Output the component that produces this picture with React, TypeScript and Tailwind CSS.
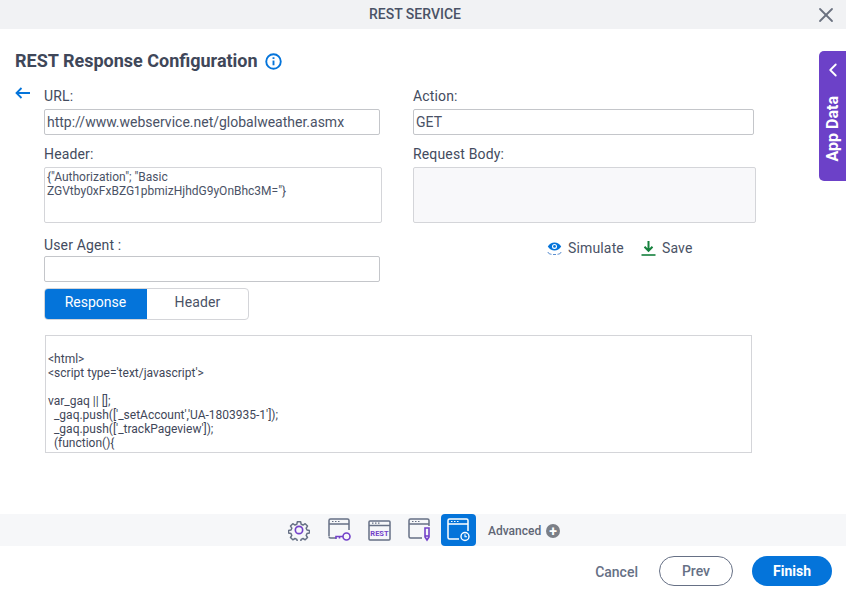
import { ChevronLeft, X } from 'lucide-react'

const labelClass = 'block text-[14px] leading-[18px] font-normal tracking-[0.15px] text-[#434b5e]'
const inputClass = 'block h-[26px] border border-[#c4c6ca] rounded-[2px] bg-white px-[2px] text-[14px] leading-[24px] text-[#4a5266]'
const slate = '#667085'
const purple = '#7342c9'

const codeLines = [
    '',
    '<html>',
    "<script type='text/javascript'>",
    '',
    'var_gaq || [];',
    "  _gaq.push(['_setAccount','UA-1803935-1']);",
    "  _gaq.push(['_trackPageview']);",
    '  (function(){',
]

const GearIcon = () => (
    <svg width="22" height="22" viewBox="0 0 24 24" fill="none" stroke={slate} strokeWidth="1.800" strokeLinejoin="round">
        <path d="M10 2h4l.6 3 2.300 1 2.600-1.600 2.800 2.800-1.600 2.600 1 2.200 3 .6v3l-3 .7-1 2.300 1.600 2.500-2.800 2.800-2.600-1.600-2.300 1-.6 3h-4l-.6-3-2.300-1-2.600 1.600-2.800-2.800 1.600-2.500-1-2.300-3-.7v-3l3-.6 1-2.200L1.700 7.200l2.800-2.800 2.600 1.600 2.300-1z" transform="translate(1.200 1.200) scale(.9)" />
        <circle cx="12" cy="12" r="4" stroke={purple} />
    </svg>
)

const KeyIcon = () => (
    <svg width="23" height="24" viewBox="0 0 23 24">
        <path d="M1 18V2.500A1.500 1.500 0 0 1 2.500 1h17A1.500 1.500 0 0 1 21 2.500V12M1 6h20M8 20H2.500A1.500 1.500 0 0 1 1 18.500" fill="none" stroke={slate} strokeWidth="1.500" />
        <path d="M4 3.500h1.500M7 3.500h1.500M10 3.500h1.500" stroke={slate} strokeWidth="1.200" />
        <circle cx="18.500" cy="18.500" r="3.500" fill="none" stroke={purple} strokeWidth="1.600" />
        <path d="M15 18.500H8v2.500M11.500 18.500v2" fill="none" stroke={purple} strokeWidth="1.600" />
    </svg>
)

const RestIcon = () => (
    <svg width="23" height="21" viewBox="0 0 23 21">
        <rect x="1" y="1" width="21" height="19" rx="1" fill="none" stroke={slate} strokeWidth="1.500" />
        <path d="M1 5.500h21" stroke={slate} strokeWidth="1.500" />
        <path d="M4 3.200h1.500M7 3.200h1.500M10 3.200h1.500" stroke={slate} strokeWidth="1.200" />
        <text x="11.500" y="15.500" textAnchor="middle" fontSize="7.500" fontWeight="700" fontFamily="Roboto, sans-serif" fill={purple}>REST</text>
    </svg>
)

const PenIcon = () => (
    <svg width="23" height="24" viewBox="0 0 23 24">
        <path d="M14 20H2.500A1.500 1.500 0 0 1 1 18.500v-16A1.500 1.500 0 0 1 2.500 1h17A1.500 1.500 0 0 1 21 2.500V8M1 6h20" fill="none" stroke={slate} strokeWidth="1.500" />
        <path d="M4 3.500h1.500M7 3.500h1.500M10 3.500h1.500" stroke={slate} strokeWidth="1.200" />
        <path d="M17 10h4v9l-2 3-2-3z" fill="none" stroke={purple} strokeWidth="1.600" />
        <path d="M17 18h4" stroke={purple} strokeWidth="1.600" />
    </svg>
)

const ClockWindowIcon = () => (
    <svg width="23" height="24" viewBox="0 0 23 24" fill="none" stroke="white">
        <path d="M12 21H2.500A1.500 1.500 0 0 1 1 19.500v-17A1.500 1.500 0 0 1 2.500 1h17A1.500 1.500 0 0 1 21 2.500V13M1 6h20" strokeWidth="1.500" />
        <path d="M4 3.500h1.500M7 3.500h1.500M10 3.500h1.500" strokeWidth="1.200" />
        <circle cx="18" cy="18.500" r="4" strokeWidth="1.400" />
        <path d="M18 16.300v2.400h2" strokeWidth="1.100" />
    </svg>
)

const SimulateIcon = () => (
    <svg width="15" height="15" viewBox="0 0 15 15">
        <path d="M.8 5.500C2.500 2.800 4.800 1.500 7.500 1.500s5 1.300 6.700 4C12.500 8.200 10.200 9.500 7.500 9.500S2.500 8.200.8 5.500z" fill="#0474da" />
        <circle cx="7.500" cy="5.400" r="2.500" fill="white" />
        <circle cx="7.500" cy="5.400" r="1.400" fill="#0474da" />
        <path d="M1 11c0 1.500 1.500 2 3.500 2.300M14 11c0 1.500-1.500 2-3.500 2.300M6 13.500h3" fill="none" stroke="#5b8fd0" strokeWidth="1" />
    </svg>
)

const SaveIcon = () => (
    <svg width="15" height="15" viewBox="0 0 15 15">
        <path d="M7.500 0v9M3.500 5.800l4 4 4-4" fill="none" stroke="#14803c" strokeWidth="2" />
        <path d="M0.500 14h14" stroke="#14803c" strokeWidth="1.600" />
    </svg>
)

const App = () => {
    return (
        <div className="relative flex h-[595px] w-[846px] flex-col overflow-hidden bg-white font-['Roboto',sans-serif] text-[#4a5266]">
            <header className="relative flex h-[29px] shrink-0 items-center justify-center bg-[#f1f2f4] pr-[16px] text-[14px] font-medium">
                REST SERVICE
                <X className="absolute right-[8px] top-[3px] text-[#6b7280]" size={24} strokeWidth={1.800} />
            </header>

            <main className="flex-1">
                <div className="mt-[20px] flex h-[24px] items-center pl-[15px]">
                    <h1 className="text-[18px] leading-[24px] font-bold text-[#3f4759]">REST Response Configuration</h1>
                    <svg className="ml-[7px]" width="17" height="17" viewBox="0 0 18 18" fill="none" stroke="#0474da">
                        <circle cx="9" cy="9" r="7.700" strokeWidth="2" />
                        <path d="M9 8v5" strokeWidth="2" />
                        <path d="M9 4.500v1.800" strokeWidth="2" />
                    </svg>
                </div>

                <div className="mt-[14px] flex">
                    <div className="w-[44px] shrink-0 pl-[15px]">
                        <svg width="15" height="12" viewBox="0 0 15 12" fill="none" stroke="#0474da" strokeWidth="1.800">
                            <path d="M15 6H2M6.500 1 1.500 6l5 5" />
                        </svg>
                    </div>
                    <div className="flex-1">
                        <div className="grid grid-cols-[369px_1fr]">
                            <div>
                                <label className={labelClass}>URL:</label>
                                <div className={`${inputClass} mt-[4px] w-[336px]`}>http://www.webservice.net/globalweather.asmx</div>
                                <label className={`${labelClass} mt-[10px]`}>Header:</label>
                                <div className="mt-[4px] h-[56px] w-[338px] rounded-[2px] border border-[#d4d5d9] px-[2px] pt-[2px] text-[12px] leading-[14px]">
                                    {'{"Authorization"; "Basic'}
                                    <br />
                                    {'ZGVtby0xFxBZG1pbmizHjhdG9yOnBhc3M="}'}
                                </div>
                                <label className={`${labelClass} mt-[13px]`}>User Agent :</label>
                                <div className={`${inputClass} mt-[2px] w-[336px]`} />
                            </div>
                            <div>
                                <label className={labelClass}>Action:</label>
                                <div className={`${inputClass} mt-[4px] w-[341px]`}>GET</div>
                                <label className={`${labelClass} mt-[10px]`}>Request Body:</label>
                                <div className="mt-[4px] h-[56px] w-[343px] rounded-[2px] border border-[#d4d5d9] bg-[#f8f8fa]" />
                                <div className="mt-[16px] flex items-center pl-[134px] text-[14px] leading-[18px] tracking-[0.15px]">
                                    <SimulateIcon />
                                    <span className="ml-[6px]">Simulate</span>
                                    <span className="ml-[17px]"><SaveIcon /></span>
                                    <span className="ml-[6px]">Save</span>
                                </div>
                            </div>
                        </div>

                        <div className="mt-[6px] flex h-[32px] w-[205px] overflow-hidden rounded-[4px] border border-[#d4d5d9] text-[14px]">
                            <div className="-m-px flex w-[103px] items-center justify-center bg-[#0474da] pb-[3px] text-white">Response</div>
                            <div className="flex flex-1 items-center justify-center pb-[3px] pl-px tracking-[0.15px]">Header</div>
                        </div>

                        <pre className="ml-px mt-[15px] h-[118px] w-[707px] overflow-hidden border border-[#d4d5d9] px-[2px] pt-[2px] font-['Roboto',sans-serif] text-[12px] leading-[14px] text-[#3f4759]">
                            {codeLines.join('\n')}
                        </pre>
                    </div>
                </div>
            </main>

            <div className="flex h-[32px] shrink-0 items-center bg-[#f6f7f9] pl-[288px]">
                <GearIcon />
                <span className="ml-[18px] flex"><KeyIcon /></span>
                <span className="ml-[17px] flex"><RestIcon /></span>
                <span className="ml-[17px] flex"><PenIcon /></span>
                <span className="ml-[10px] flex h-[32px] w-[35px] items-center justify-center rounded-[4px] bg-[#0474da]"><ClockWindowIcon /></span>
                <span className="ml-[12px] mt-[2px] text-[12px] font-medium text-[#5f6675]">Advanced</span>
                <span className="ml-[5px] mt-[2px] flex h-[14px] w-[14px] items-center justify-center rounded-full bg-[#7b7f87] text-[14px] font-bold leading-none text-white">+</span>
            </div>

            <footer className="flex h-[49px] shrink-0 items-start justify-end pr-[14px] pt-[10px] text-[14px] font-medium">
                <span className="mr-[21px] mt-[6px] text-[#667085]">Cancel</span>
                <button className="h-[30px] w-[74px] rounded-full border border-[#667085] text-[#667085]">Prev</button>
                <button className="ml-[19px] h-[30px] w-[80px] rounded-full bg-[#0474da] font-bold text-white">Finish</button>
            </footer>

            <div className="absolute right-0 top-[51px] flex h-[130px] w-[27px] flex-col items-center rounded-l-[5px] bg-[#6c41c8] pt-[8px] text-white">
                <ChevronLeft size={22} strokeWidth={2} />
                <span className="mt-[15px] rotate-180 text-[16px] leading-[20px] font-bold [writing-mode:vertical-rl]">App Data</span>
            </div>
        </div>
    )
}

export default App
